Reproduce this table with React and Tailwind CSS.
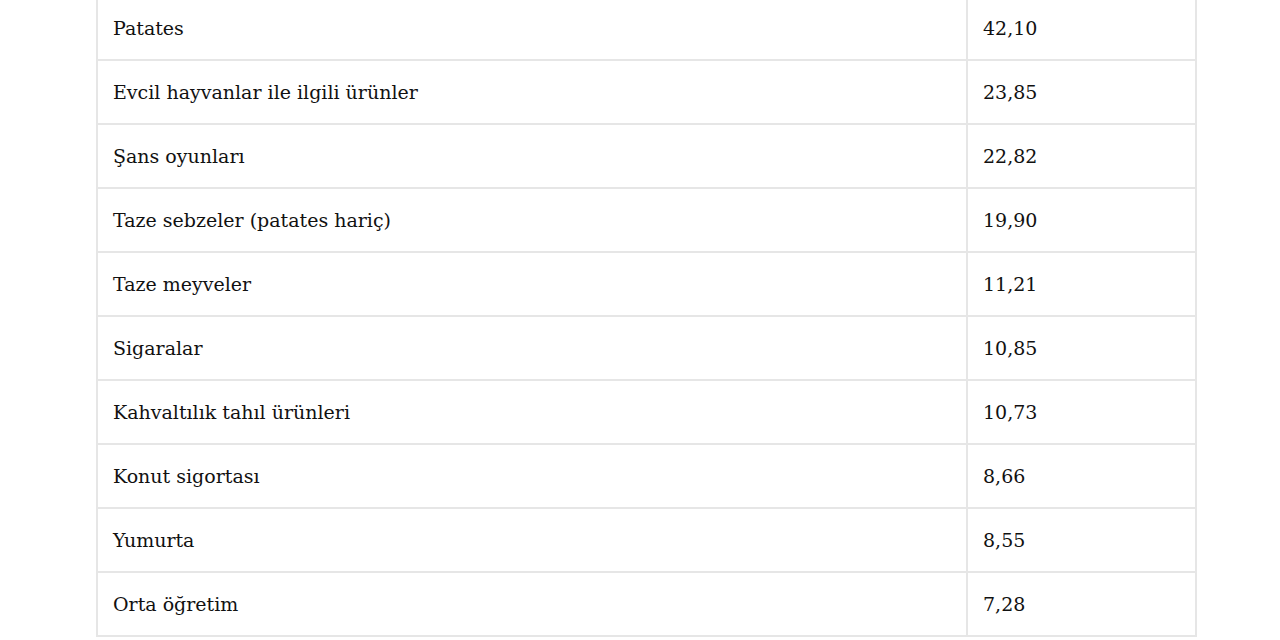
const rows = [
  ["Patates", "42,10"],
  ["Evcil hayvanlar ile ilgili ürünler", "23,85"],
  ["Şans oyunları", "22,82"],
  ["Taze sebzeler (patates hariç)", "19,90"],
  ["Taze meyveler", "11,21"],
  ["Sigaralar", "10,85"],
  ["Kahvaltılık tahıl ürünleri", "10,73"],
  ["Konut sigortası", "8,66"],
  ["Yumurta", "8,55"],
  ["Orta öğretim", "7,28"],
];

export default function App() {
  return (
    <div className="min-h-screen bg-white px-[96px] overflow-hidden">
      <table
        className="-mt-[5px] w-[1101px] border-collapse text-[19px] text-[#111111]"
        style={{ fontFamily: '"DejaVu Serif", "Liberation Serif", serif' }}
      >
        <tbody>
          {rows.map(([label, value]) => (
            <tr key={label} className="h-[64px]">
              <td className="border-2 border-[#e6e6e6] px-[15px] align-middle">
                {label}
              </td>
              <td className="w-[229px] border-2 border-[#e6e6e6] px-[15px] align-middle">
                {value}
              </td>
            </tr>
          ))}
        </tbody>
      </table>
    </div>
  );
}
